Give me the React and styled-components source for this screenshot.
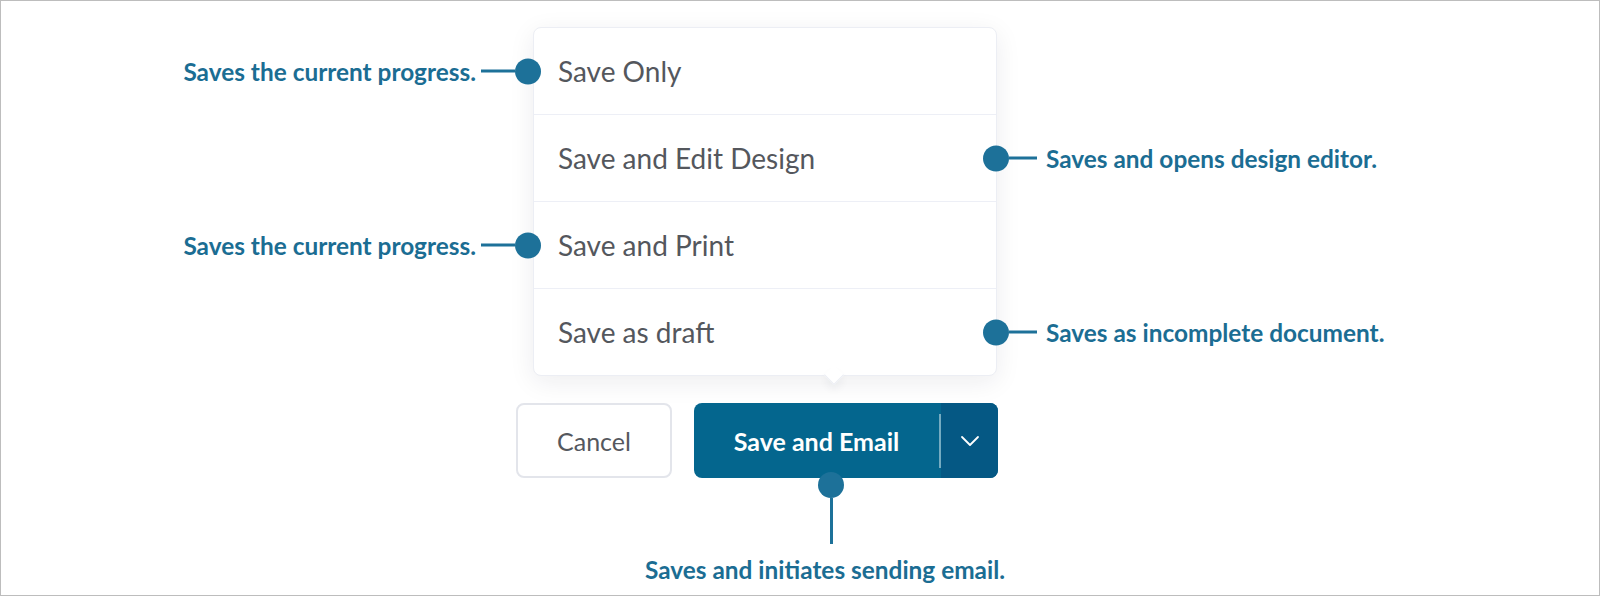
import * as React from "react";
import styled, { createGlobalStyle } from "styled-components";

const items = [
  { label: "Save Only", note: "Saves the current progress.", side: "left" },
  { label: "Save and Edit Design", note: "Saves and opens design editor.", side: "right" },
  { label: "Save and Print", note: "Saves the current progress.", side: "left" },
  { label: "Save as draft", note: "Saves as incomplete document.", side: "right" },
];

export default function App() {
  return (
    <>
      <GlobalStyle />
      <Frame>
        <Stack>
          <Menu>
            {items.map((item) => (
              <MenuItem key={item.label}>
                {item.label}
                <Callout side={item.side}>
                  {item.side === "left" ? (
                    <>
                      <NoteText>{item.note}</NoteText>
                      <HLine $w={34} />
                      <Dot />
                    </>
                  ) : (
                    <>
                      <Dot />
                      <HLine $w={28} />
                      <NoteText $gapLeft>{item.note}</NoteText>
                    </>
                  )}
                </Callout>
              </MenuItem>
            ))}
          </Menu>
          <ButtonRow>
            <CancelButton>Cancel</CancelButton>
            <SplitButton>
              <MainPart>Save and Email</MainPart>
              <ToggleSeparator />
              <TogglePart>
                <svg width="20" height="12" viewBox="0 0 20 12" fill="none">
                  <path d="M2 2l8 8 8-8" stroke="#fff" strokeWidth="1.8" strokeLinecap="round" strokeLinejoin="round" />
                </svg>
              </TogglePart>
            </SplitButton>
          </ButtonRow>
          <BottomCallout>
            <Dot />
            <VLine />
            <NoteText $shift>Saves and initiates sending email.</NoteText>
          </BottomCallout>
        </Stack>
      </Frame>
    </>
  );
}

const GlobalStyle = createGlobalStyle`
  body {
    margin: 0;
    background: #fff;
    font-family: Lato, "Open Sans", sans-serif;
  }
`;

const Frame = styled.div`
  width: 1600px;
  height: 596px;
  box-sizing: border-box;
  border: 1px solid #bdbdbd;
  padding: 26px 0 0 515px;
  overflow: hidden;
`;

const Stack = styled.div`
  display: flex;
  flex-direction: column;
  align-items: flex-start;
`;

const Menu = styled.div`
  position: relative;
  width: 464px;
  margin-left: 17px;
  box-sizing: border-box;
  background: #fff;
  border: 1px solid #eceef4;
  border-radius: 8px;
  box-shadow: 0 6px 26px rgba(20, 30, 50, 0.08);

  &::after {
    content: "";
    position: absolute;
    left: 293px;
    bottom: -7px;
    width: 13px;
    height: 13px;
    background: #fff;
    border-right: 1px solid #eceef4;
    border-bottom: 1px solid #eceef4;
    transform: rotate(45deg);
    box-shadow: 4px 4px 8px rgba(20, 30, 50, 0.05);
  }
`;

const MenuItem = styled.div`
  position: relative;
  display: flex;
  align-items: center;
  height: 86px;
  padding-left: 24px;
  font-size: 28px;
  color: #54575d;
  border-bottom: 1px solid #edeff6;

  &:last-child {
    border-bottom: none;
  }
`;

const Callout = styled.div`
  position: absolute;
  top: 50%;
  transform: translateY(-50%);
  display: flex;
  align-items: center;
  z-index: 2;
  ${(p) => (p.side === "left" ? "right: calc(100% - 7px);" : "left: calc(100% - 13px);")}
`;

const NoteText = styled.span`
  font-size: 24.4px;
  font-weight: 700;
  color: #1b6d93;
  white-space: nowrap;
  margin-right: ${(p) => (p.$shift ? "12px" : p.$gapLeft ? "0" : "5px")};
  margin-left: ${(p) => (p.$gapLeft ? "9px" : "0")};
`;

const HLine = styled.span`
  display: block;
  width: ${(p) => p.$w}px;
  height: 3px;
  background: #1d7199;
`;

const Dot = styled.span`
  display: block;
  flex: none;
  width: 26px;
  height: 26px;
  border-radius: 50%;
  background: #1d7199;
`;

const ButtonRow = styled.div`
  display: flex;
  gap: 22px;
  margin-top: 27px;
`;

const CancelButton = styled.button`
  width: 156px;
  height: 75px;
  box-sizing: border-box;
  border: 2px solid #e3e5eb;
  border-radius: 8px;
  background: #fff;
  color: #55585e;
  font-family: inherit;
  font-size: 25px;
`;

const SplitButton = styled.div`
  display: flex;
  align-items: center;
  width: 304px;
  height: 75px;
  border-radius: 8px;
  overflow: hidden;
  background: #04668e;
`;

const MainPart = styled.div`
  flex: 1;
  text-align: center;
  color: #fff;
  font-size: 25px;
  font-weight: 700;
`;

const ToggleSeparator = styled.span`
  width: 2px;
  height: 54px;
  background: rgba(255, 255, 255, 0.45);
`;

const TogglePart = styled.div`
  display: flex;
  align-items: center;
  justify-content: center;
  width: 57px;
  height: 100%;
  background: #055884;
`;

const BottomCallout = styled.div`
  display: flex;
  flex-direction: column;
  align-items: center;
  width: 420px;
  margin: -6px 0 0 105px;
  position: relative;
  z-index: 2;
`;

const VLine = styled.span`
  display: block;
  width: 3px;
  height: 46px;
  background: #1d7199;
  margin-bottom: 11px;
`;
